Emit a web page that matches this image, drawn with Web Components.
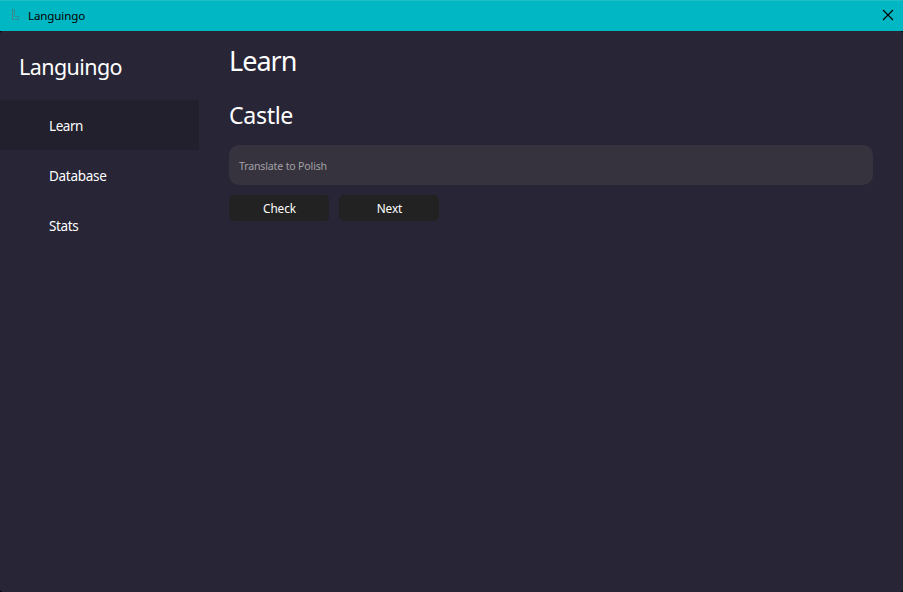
<!DOCTYPE html>
<html lang="en">
<head>
<meta charset="utf-8">
<title>Languingo</title>
<style>
html, body { margin: 0; height: 100%; overflow: hidden; background: #000; }
body { font-family: "Noto Sans", "Open Sans", sans-serif; color: #fff; }
</style>
</head>
<body>
<lang-app></lang-app>
<script>
class BaseElement extends HTMLElement {
  constructor() {
    super();
    this.attachShadow({ mode: "open" }).innerHTML = this.constructor.markup;
  }
}

/* A line of text tracked to an exact advance width. */
customElements.define("fit-text", class extends BaseElement {
  static markup = `<style>
    :host { display: block; white-space: nowrap; }
    span { display: inline-block; }
  </style><span><slot></slot></span>`;
  connectedCallback() {
    const span = this.shadowRoot.querySelector("span");
    const want = Number(this.getAttribute("width"));
    const count = this.textContent.length;
    const gap = (want - span.getBoundingClientRect().width) / count;
    span.style.letterSpacing = gap.toFixed(3) + "px";
  }
});

customElements.define("title-bar", class extends BaseElement {
  static markup = `<style>
    :host { display: flex; align-items: center; height: 31px; box-sizing: border-box;
      padding: 0 9px 2px 9px; background: #00b7c3; border-top: 1px solid #1fbdc8;
      color: #000; font-size: 11.6px; line-height: 16px; }
    .logo { margin-right: 7px; display: block; }
    .name { flex: 1; padding-top: 2px; }
    .close { display: block; }
  </style>
  <svg class="logo" width="12" height="14" viewBox="0 0 12 14" fill="none">
    <path d="M3.5 1.5H5.5V8.5H9.5V11.5H3.5Z" stroke="#2b9298"/>
    <path d="M3.5 1.5V11.5" stroke="#3f8386"/>
  </svg>
  <div class="name"><slot></slot></div>
  <svg class="close" width="12" height="12" viewBox="0 0 12 12">
    <path d="M1 1L11 11M11 1L1 11" stroke="#000" stroke-width="1.1"/>
  </svg>`;
});

customElements.define("nav-item", class extends BaseElement {
  static markup = `<style>
    :host { display: flex; align-items: center; height: 50px; box-sizing: border-box;
      padding: 2px 0 0 49px; font-size: 13.5px; line-height: 20px; }
    :host([selected]) { background: #22202c; }
  </style><slot></slot>`;
});

customElements.define("side-bar", class extends BaseElement {
  static markup = `<style>
    :host { display: block; width: 199px; }
    header { height: 69px; box-sizing: border-box; padding: 21px 0 0 19px;
      font-size: 21.5px; line-height: 30px; }
  </style><header><slot name="brand"></slot></header><nav><slot></slot></nav>`;
});

customElements.define("text-field", class extends BaseElement {
  static markup = `<style>
    :host { display: flex; align-items: center; height: 40px; box-sizing: border-box;
      padding: 2px 10px 0; border-radius: 10px; background: #36333e;
      color: #a3a1a6; font-size: 10.6px; line-height: 16px; }
  </style><slot></slot>`;
});

customElements.define("push-button", class extends BaseElement {
  static markup = `<style>
    :host { display: flex; align-items: center; justify-content: center;
      width: 100px; height: 26px; box-sizing: border-box;
      border-radius: 5px; background: #222; font-size: 11.8px; line-height: 16px; }
    ::slotted(*) { padding-left: 1px; }
  </style><slot></slot>`;
});

customElements.define("learn-page", class extends BaseElement {
  static markup = `<style>
    :host { display: block; flex: 1; padding: 12px 30px 0 30px; }
    .h1 { font-size: 27px; line-height: 36px; height: 56px; }
    .h2 { font-size: 23.2px; line-height: 32px; height: 46px; }
    .row { display: flex; gap: 10px; margin-top: 10px; }
  </style>
  <div class="h1"><fit-text width="67.5">Learn</fit-text></div>
  <div class="h2"><fit-text width="64">Castle</fit-text></div>
  <text-field><fit-text width="88">Translate to Polish</fit-text></text-field>
  <div class="row">
    <push-button><fit-text width="33">Check</fit-text></push-button>
    <push-button><fit-text width="25.5">Next</fit-text></push-button>
  </div>`;
});

customElements.define("lang-app", class extends BaseElement {
  static markup = `<style>
    :host { display: flex; flex-direction: column; height: 100vh; }
    main { flex: 1; display: flex; background: #282536; border-radius: 3px; }
  </style>
  <title-bar><fit-text width="57">Languingo</fit-text></title-bar>
  <main>
    <side-bar>
      <fit-text slot="brand" width="103">Languingo</fit-text>
      <nav-item selected><fit-text width="34">Learn</fit-text></nav-item>
      <nav-item><fit-text width="57.5">Database</fit-text></nav-item>
      <nav-item><fit-text width="29.5">Stats</fit-text></nav-item>
    </side-bar>
    <learn-page></learn-page>
  </main>`;
});
</script>
</body>
</html>
